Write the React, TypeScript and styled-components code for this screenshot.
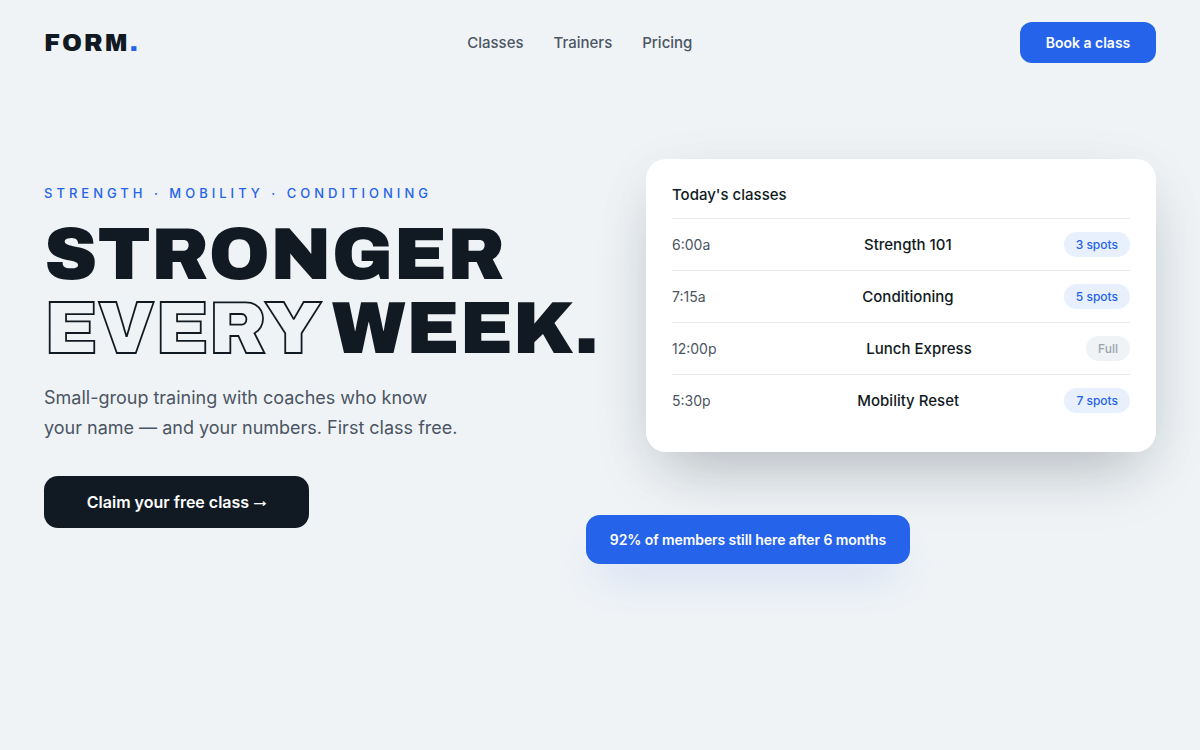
import styled, { createGlobalStyle } from 'styled-components';

const classes = [
  { time: '6:00a', name: 'Strength 101', spots: '3 spots', full: false },
  { time: '7:15a', name: 'Conditioning', spots: '5 spots', full: false },
  { time: '12:00p', name: 'Lunch Express', spots: 'Full', full: true },
  { time: '5:30p', name: 'Mobility Reset', spots: '7 spots', full: false },
];

function App() {
  return (
    <>
      <GlobalStyle />
      <Page>
        <Nav>
          <Logo>
            FORM<Dot>.</Dot>
          </Logo>
          <NavLinks>
            <NavLink>Classes</NavLink>
            <NavLink>Trainers</NavLink>
            <NavLink>Pricing</NavLink>
          </NavLinks>
          <BookButton>Book a class</BookButton>
        </Nav>

        <Hero>
          <Copy>
            <Eyebrow>STRENGTH · MOBILITY · CONDITIONING</Eyebrow>
            <Headline>
              STRONGER
              <br />
              <Outline>EVERY</Outline> WEEK.
            </Headline>
            <Lead>
              Small-group training with coaches who know
              <br />
              your name — and your numbers. First class free.
            </Lead>
            <Cta>
              Claim your free class <Arrow>→</Arrow>
            </Cta>
          </Copy>

          <Card>
            <CardTitle>Today's classes</CardTitle>
            {classes.map((c) => (
              <Row key={c.time}>
                <Time>{c.time}</Time>
                <ClassName>{c.name}</ClassName>
                <Spots $full={c.full}>{c.spots}</Spots>
              </Row>
            ))}
          </Card>

          <Retention>92% of members still here after 6 months</Retention>
        </Hero>
      </Page>
    </>
  );
}

export default App;

const GlobalStyle = createGlobalStyle`
  * {
    box-sizing: border-box;
  }

  body {
    margin: 0;
    background: #eff3f6;
    font-family: Inter, "Liberation Sans", sans-serif;
    color: #111a22;
  }
`;

const Page = styled.div`
  width: 1200px;
  height: 750px;
  overflow: hidden;
  background: #eff3f6;
`;

const Nav = styled.nav`
  display: flex;
  justify-content: space-between;
  align-items: center;
  padding: 22px 44px;
`;

const Logo = styled.div`
  font-family: Archivo, Inter, sans-serif;
  font-size: 24px;
  font-weight: 900;
  letter-spacing: 0.08em;
  color: #111a22;
`;

const Dot = styled.span`
  color: #2563eb;
`;

const NavLinks = styled.div`
  display: flex;
  gap: 30px;
`;

const NavLink = styled.a`
  font-size: 15px;
  font-weight: 500;
  color: #4b5563;
`;

const BookButton = styled.button`
  width: 136px;
  height: 41px;
  border: none;
  border-radius: 12px;
  background: #2563eb;
  color: #fff;
  font-family: inherit;
  font-size: 14px;
  font-weight: 600;
`;

const Hero = styled.section`
  position: relative;
  display: flex;
  justify-content: space-between;
  align-items: flex-start;
  padding: 74px 44px 0;
`;

const Copy = styled.div`
  padding-top: 26px;
`;

const Eyebrow = styled.div`
  font-size: 13px;
  line-height: 16px;
  font-weight: 500;
  letter-spacing: 4px;
  color: #2563eb;
`;

const Headline = styled.h1`
  margin: 17px 0 0;
  font-family: Archivo, Inter, sans-serif;
  font-size: 74px;
  line-height: 74px;
  font-weight: 900;
  white-space: nowrap;
  color: #111a22;
`;

const Outline = styled.span`
  color: transparent;
  -webkit-text-stroke: 1.8px #111a22;
`;

const Lead = styled.p`
  margin: 17px 0 0;
  font-size: 18px;
  line-height: 30px;
  color: #4b5563;
`;

const Cta = styled.button`
  display: block;
  width: 265px;
  height: 52px;
  margin-top: 33px;
  border: none;
  border-radius: 14px;
  background: #111a22;
  color: #fff;
  font-family: inherit;
  font-size: 16px;
  font-weight: 600;
`;

const Arrow = styled.span`
  font-family: Archivo, sans-serif;
  font-size: 13px;
  font-weight: 700;
  vertical-align: 1px;
`;

const Card = styled.div`
  width: 510px;
  padding: 26px;
  border-radius: 20px;
  background: #fff;
  box-shadow: 0 12px 60px rgba(17, 26, 34, 0.05),
    0 30px 60px -20px rgba(17, 26, 34, 0.25);
`;

const CardTitle = styled.div`
  padding-bottom: 13px;
  font-size: 15px;
  line-height: 20px;
  font-weight: 500;
  color: #111a22;
`;

const Row = styled.div`
  display: flex;
  justify-content: space-between;
  align-items: center;
  height: 52px;
  border-top: 1px solid #e5eaee;
`;

const Time = styled.span`
  width: 80px;
  font-size: 14px;
  color: #4b5563;
`;

const ClassName = styled.span`
  font-size: 15px;
  font-weight: 500;
  color: #111a22;
`;

const Spots = styled.span<{ $full: boolean }>`
  padding: 4px 12px;
  border-radius: 999px;
  font-size: 12px;
  line-height: 17px;
  font-weight: 500;
  background: ${(p) => (p.$full ? '#eff3f6' : '#e8effd')};
  color: ${(p) => (p.$full ? '#9ca3af' : '#2563eb')};
`;

const Retention = styled.div`
  position: absolute;
  left: 586px;
  top: 430px;
  width: 324px;
  height: 49px;
  display: flex;
  align-items: center;
  justify-content: center;
  border-radius: 14px;
  background: #2563eb;
  color: #fff;
  font-size: 14px;
  font-weight: 600;
  letter-spacing: -0.08px;
  box-shadow: 0 24px 40px -12px rgba(37, 99, 235, 0.16);
`;
